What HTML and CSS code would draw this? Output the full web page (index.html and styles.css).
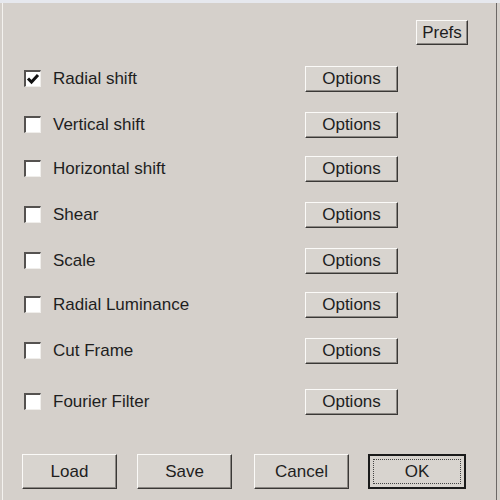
FILE: index.html
```html
<!DOCTYPE html>
<html>
<head>
<meta charset="utf-8">
<link rel="stylesheet" href="styles.css">
</head>
<body>
<div class="titlestrip"></div>
<div class="dialog">
  <div class="topbar">
    <button class="btn prefs">Prefs</button>
  </div>
  <div class="list">
    <div class="row"><span class="check checked"><svg viewBox="0 0 14 14" width="14" height="14"><path d="M2 6.5 L5.5 10 L12 3" fill="none" stroke="#111" stroke-width="3"/></svg></span><span class="label">Radial shift</span><button class="btn opt">Options</button></div>
    <div class="row"><span class="check"></span><span class="label">Vertical shift</span><button class="btn opt">Options</button></div>
    <div class="row short"><span class="check"></span><span class="label">Horizontal shift</span><button class="btn opt">Options</button></div>
    <div class="row"><span class="check"></span><span class="label">Shear</span><button class="btn opt">Options</button></div>
    <div class="row"><span class="check"></span><span class="label">Scale</span><button class="btn opt">Options</button></div>
    <div class="row short"><span class="check"></span><span class="label">Radial Luminance</span><button class="btn opt">Options</button></div>
    <div class="row"><span class="check"></span><span class="label">Cut Frame</span><button class="btn opt">Options</button></div>
    <div class="row last"><span class="check"></span><span class="label">Fourier Filter</span><button class="btn opt">Options</button></div>
  </div>
  <div class="bottom">
    <button class="btn big load">Load</button>
    <button class="btn big save">Save</button>
    <button class="btn big cancel">Cancel</button>
    <button class="btn big ok"><span class="focus">OK</span></button>
  </div>
</div>
</body>
</html>
```
FILE: styles.css
```css
html, body {
  margin: 0;
  padding: 0;
  width: 500px;
  height: 500px;
  overflow: hidden;
  background: #d5d0cb;
  font-family: "Liberation Sans", Arial, sans-serif;
  color: #1e1e1e;
}
.titlestrip {
  height: 3px;
  background: #e6e8ee;
}
.dialog {
  box-sizing: border-box;
  height: 497px;
  margin-left: 2px;
  width: 495px;
  border-left: 1px solid #f4f2ef;
  border-right: 1px solid #6c6866;
  display: flex;
  flex-direction: column;
}
.topbar {
  display: flex;
  justify-content: flex-end;
  padding-top: 17px;
  padding-right: 28px;
}
.btn {
  box-sizing: border-box;
  font-family: "Liberation Sans", Arial, sans-serif;
  font-size: 17px;
  color: #1e1e1e;
  background: #d8d4cf;
  border-top: 1px solid #fbfaf8;
  border-left: 1px solid #fbfaf8;
  border-right: 1px solid #3a3836;
  border-bottom: 1px solid #3a3836;
  box-shadow: inset -1px -1px 0 #8c8884;
  padding: 0;
  margin: 0;
  display: flex;
  align-items: center;
  justify-content: center;
}
.prefs {
  width: 52px;
  height: 25px;
}
.list {
  display: flex;
  flex-direction: column;
  padding-top: 21px;
  padding-left: 21px;
}
.row {
  display: flex;
  align-items: center;
  height: 25px;
  margin-bottom: 21px;
}
.row.short {
  margin-top: -2px;
}
.row.last {
  margin-top: 5px;
}
.check {
  box-sizing: border-box;
  width: 17px;
  height: 17px;
  background: #fff;
  border-top: 2px solid #555250;
  border-left: 2px solid #555250;
  border-right: 1px solid #f0eeeb;
  border-bottom: 1px solid #f0eeeb;
  display: flex;
  align-items: center;
  justify-content: center;
  margin-right: 12px;
}
.label {
  font-size: 17px;
  width: 252px;
}
.opt {
  width: 93px;
  height: 26px;
}
.bottom {
  display: flex;
  padding-left: 19px;
  margin-top: 19px;
}
.big {
  height: 35px;
  width: 95px;
}
.save { margin-left: 20px; }
.cancel { margin-left: 22px; }
.ok {
  margin-left: 19px;
  width: 98px;
  border: 2px solid #1a1a1a;
  box-shadow: none;
  padding: 3px;
}
.ok .focus {
  box-sizing: border-box;
  width: 100%;
  height: 100%;
  border: 1px dotted #444;
  display: flex;
  align-items: center;
  justify-content: center;
}
```
